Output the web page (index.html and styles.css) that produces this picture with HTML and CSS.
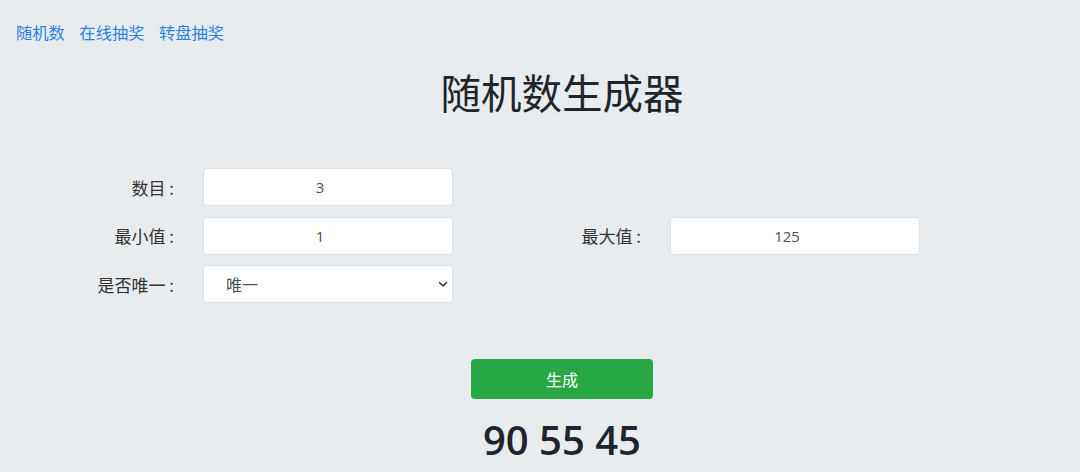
FILE: index.html
```html
<!DOCTYPE html>
<html lang="zh">
<head>
<meta charset="utf-8">
<title>随机数生成器</title>
<link rel="stylesheet" href="styles.css">
</head>
<body>
<div class="page">
  <nav class="nav">
    <a href="#">随机数</a>
    <a href="#">在线抽奖</a>
    <a href="#">转盘抽奖</a>
  </nav>
  <h1 class="title">随机数生成器</h1>
  <form class="form">
    <label class="label">数目 :</label>
    <div class="cell"><input class="field num" type="text" value="3"></div>
    <div></div><div></div>
    <label class="label">最小值 :</label>
    <div class="cell"><input class="field num" type="text" value="1"></div>
    <label class="label">最大值 :</label>
    <div class="cell"><input class="field num" type="text" value="125"></div>
    <label class="label">是否唯一 :</label>
    <div class="cell">
      <div class="select-wrap">
        <select class="field select"><option>唯一</option><option>不唯一</option></select>
        <svg class="chevron" width="10" height="7" viewBox="0 0 10 7"><path d="M1.5 1.5 L5 5 L8.5 1.5" fill="none" stroke="#343a40" stroke-width="1.6" stroke-linecap="round" stroke-linejoin="round"/></svg>
      </div>
    </div>
    <div></div><div></div>
  </form>
  <div class="actions">
    <button class="btn" type="button">生成</button>
  </div>
  <div class="result">90 55 45</div>
</div>
</body>
</html>
```
FILE: styles.css
```css
html, body {
  margin: 0;
  padding: 0;
  overflow: hidden;
}
body {
  background: #e9ecef;
  font-family: "Open Sans", "Noto Sans CJK SC", sans-serif;
  color: #212529;
  width: 1080px;
  height: 472px;
}
.page {
  width: 1124px;
}
.nav {
  display: flex;
  gap: 14.5px;
  padding: 20px 16px 0;
  line-height: 24px;
  font-size: 16.3px;
  font-family: "Noto Sans CJK SC", sans-serif;
}
.nav a {
  color: #2a82e4;
  text-decoration: none;
}
.title {
  margin: 24px 0 0;
  text-align: center;
  font-family: "Noto Sans CJK SC", sans-serif;
  font-weight: 400;
  font-size: 40.5px;
  line-height: 48px;
  color: #212529;
}
.form {
  display: grid;
  grid-template-columns: 188px 280px 187px 280px;
  grid-auto-rows: 38px;
  row-gap: 10.5px;
  margin-top: 52px;
}
.label {
  display: flex;
  align-items: center;
  justify-content: flex-end;
  padding-right: 14px;
  font-family: "Noto Sans CJK SC", sans-serif;
  font-size: 17px;
  color: #333;
}
.cell {
  padding-left: 15px;
}
.field {
  box-sizing: border-box;
  width: 250px;
  height: 38px;
  border: 1px solid #dee2e6;
  border-radius: 4px;
  background: #fff;
  text-align: center;
  font-family: "Open Sans", "Noto Sans CJK SC", sans-serif;
  font-size: 15px;
  color: #495057;
  outline: none;
}
.num {
  padding: 0 17px 0 1px;
}
.select-wrap {
  position: relative;
  width: 250px;
}
.select {
  appearance: none;
  -webkit-appearance: none;
  text-align: left;
  padding: 0 0 0 22px;
  font-family: "Noto Sans CJK SC", sans-serif;
  font-size: 16px;
}
.chevron {
  position: absolute;
  right: 5px;
  top: 16px;
}
.actions {
  display: flex;
  justify-content: center;
  margin-top: 55.5px;
}
.btn {
  width: 182px;
  height: 40px;
  border: none;
  border-radius: 4px;
  background: #28a745;
  color: #fff;
  font-family: "Noto Sans CJK SC", sans-serif;
  font-size: 16px;
}
.result {
  margin-top: 17px;
  text-align: center;
  font-family: "Open Sans", sans-serif;
  font-weight: 600;
  font-size: 40px;
  line-height: 48px;
  color: #212529;
}
```
